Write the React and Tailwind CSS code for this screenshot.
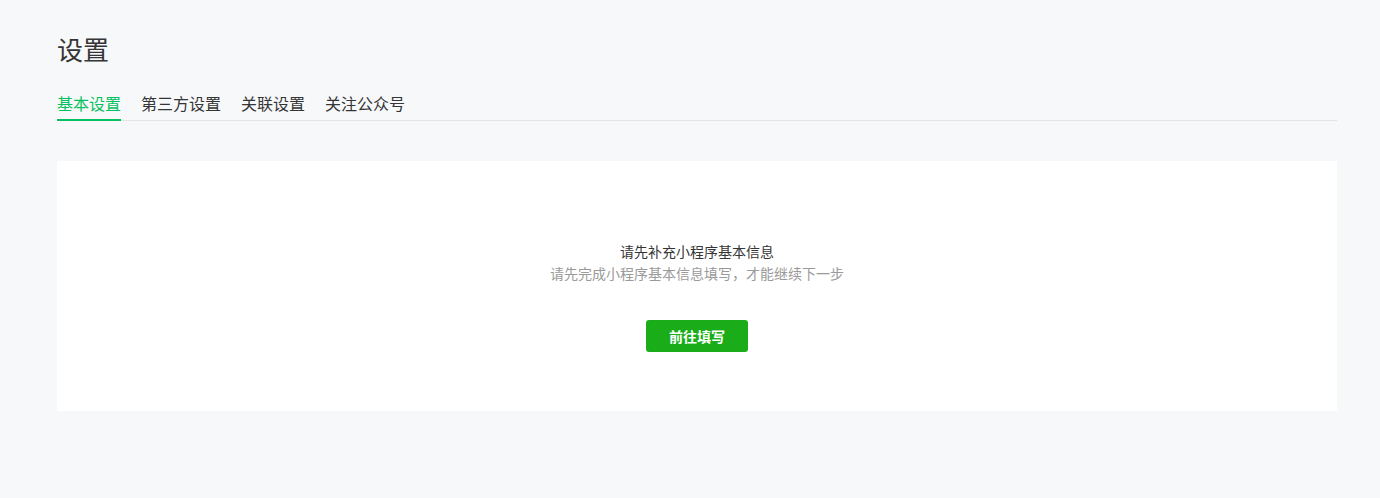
export default function App() {
  return (
    <div
      className="min-h-[498px] w-full bg-[#f7f8fa] pl-[57px] pr-[43px] pt-[30px]"
      style={{ fontFamily: '"Noto Sans CJK SC", "Noto Sans", sans-serif' }}
    >
      <h1 className="text-[26px] leading-[37px] font-normal text-[#353535]">设置</h1>
      <div className="mt-[24px] flex gap-5 border-b border-[#e3e4e6] text-[16px] leading-[24px]">
        <div className="relative pb-[5px] text-[#07c160]">
          基本设置
          <div className="absolute bottom-[-1px] left-0 h-[2px] w-full bg-[#07c160]" />
        </div>
        <div className="pb-[5px] text-[#353535]">第三方设置</div>
        <div className="pb-[5px] text-[#353535]">关联设置</div>
        <div className="pb-[5px] text-[#353535]">关注公众号</div>
      </div>
      <div className="mt-[40px] flex h-[250px] flex-col items-center bg-white pt-[79px]">
        <div className="text-[14px] leading-[22px] text-[#353535]">请先补充小程序基本信息</div>
        <div className="text-[14px] leading-[22px] text-[#9a9a9a]">请先完成小程序基本信息填写，才能继续下一步</div>
        <button className="mt-[36px] h-[32px] w-[102px] rounded-[3px] bg-[#1aad19] text-[14px] font-bold text-white">
          前往填写
        </button>
      </div>
    </div>
  );
}
